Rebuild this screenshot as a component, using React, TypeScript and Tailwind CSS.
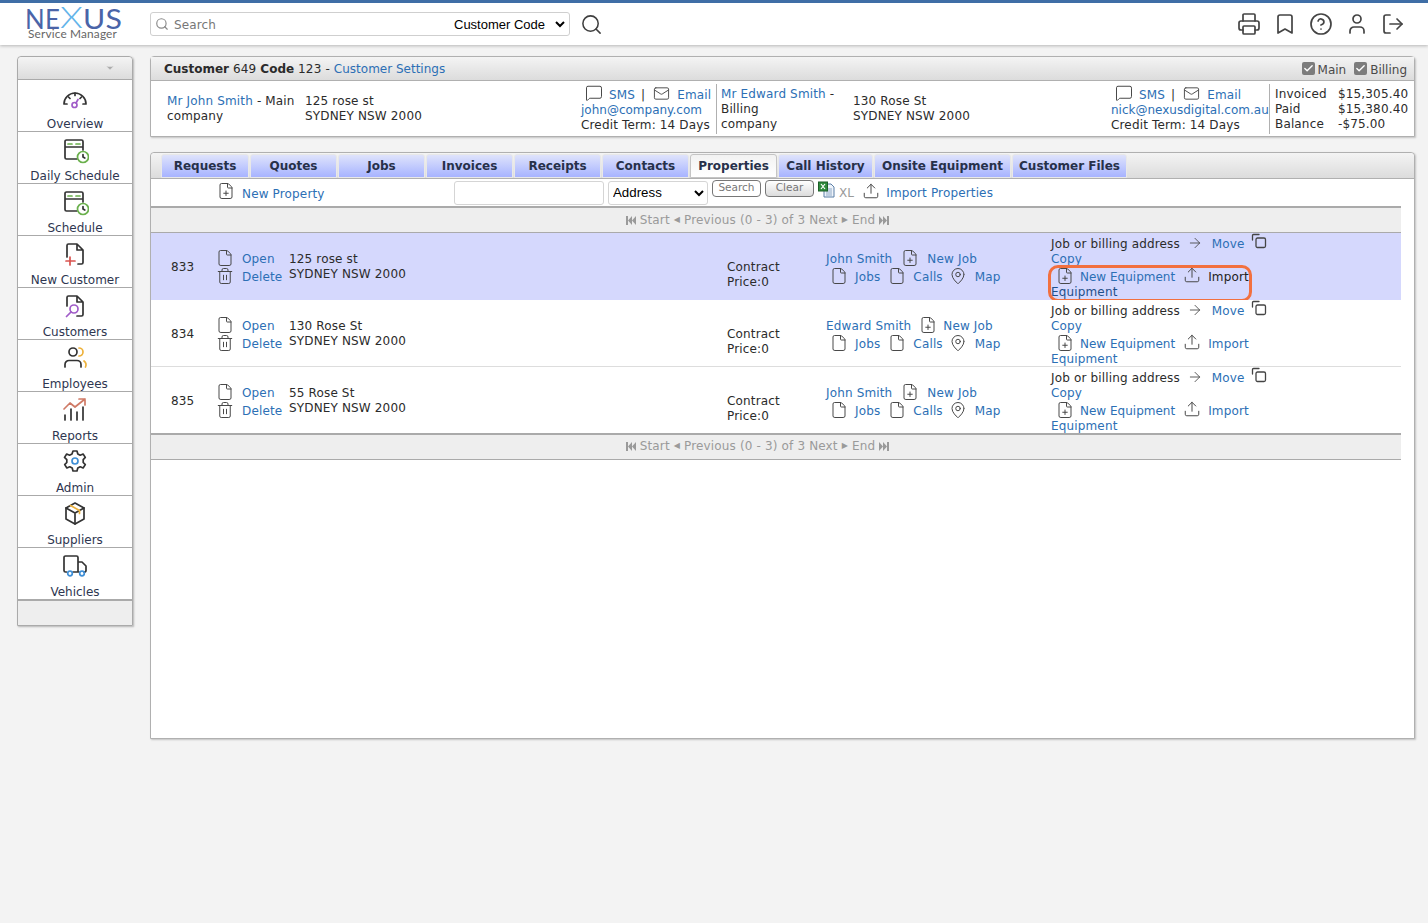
import { ArrowRight, Bookmark, Check, ChevronDown, CircleHelp, File, FilePlus, LogOut, LucideIcon, Mail, MapPin, MessageSquare, Printer, Search, Trash2, Upload, User } from 'lucide-react';
import { ReactNode } from 'react';

const tabs = [
  { name: 'Requests', width: 'w-[88px]' },
  { name: 'Quotes', width: 'w-[87px]' },
  { name: 'Jobs', width: 'w-[87px]' },
  { name: 'Invoices', width: 'w-[87px]' },
  { name: 'Receipts', width: 'w-[87px]' },
  { name: 'Contacts', width: 'w-[87px]' },
  { name: 'Properties', width: 'w-[87px]', active: true },
  { name: 'Call History', width: 'w-[95px]' },
  { name: 'Onsite Equipment', width: 'w-[137px]' },
  { name: 'Customer Files', width: 'w-[115px]' },
];

const rows = [
  { id: '833', street: '125 rose st', owner: 'John Smith', iconGap: 'ml-[10px]', jobGap: 'ml-[10px]', selected: true },
  { id: '834', street: '130 Rose St', owner: 'Edward Smith', iconGap: 'ml-[9px]', jobGap: 'ml-[8px]' },
  { id: '835', street: '55 Rose St', owner: 'John Smith', iconGap: 'ml-[10px]', jobGap: 'ml-[10px]' },
];

const Svg = ({ children }: { children: ReactNode }) => (
  <svg width="28" height="28" viewBox="0 0 28 28" fill="none" stroke="#333" strokeWidth="1.700" strokeLinecap="round" strokeLinejoin="round">
    {children}
  </svg>
);

const menu: { label: string; icon: ReactNode }[] = [
  {
    label: 'Overview',
    icon: (
      <Svg>
        <path d="M3 20h3M22 20h3M3 20c0-6 5-11 11-11s11 5 11 11" />
        <path d="M7.500 13l1.500 1.500M14 9v2.500M20.500 13L19 14.500" />
        <circle cx="13.500" cy="21" r="2.500" stroke="#a05cc8" />
        <path d="M15 19l2-3.500" stroke="#a05cc8" />
      </Svg>
    ),
  },
  {
    label: 'Daily Schedule',
    icon: (
      <Svg>
        <path d="M16 23H5.500A1.500 1.500 0 0 1 4 21.500V5.500A1.500 1.500 0 0 1 5.500 4h15A1.500 1.500 0 0 1 22 5.500V14M4 11h18" />
        <path d="M7 8h4M15 8h4" stroke="#6ab04c" />
        <circle cx="22" cy="21" r="5.500" stroke="#6ab04c" />
        <path d="M22 18.500V21l1.800 1" />
      </Svg>
    ),
  },
  {
    label: 'Schedule',
    icon: (
      <Svg>
        <path d="M16 23H5.500A1.500 1.500 0 0 1 4 21.500V5.500A1.500 1.500 0 0 1 5.500 4h15A1.500 1.500 0 0 1 22 5.500V14M4 11h18" />
        <path d="M7 8h4M15 8h4" stroke="#6ab04c" />
        <circle cx="22" cy="21" r="5.500" stroke="#6ab04c" />
        <path d="M22 18.500V21l1.800 1" />
      </Svg>
    ),
  },
  {
    label: 'New Customer',
    icon: (
      <Svg>
        <path d="M6 17V5.500A1.500 1.500 0 0 1 7.500 4H16l6 6v12.500a1.500 1.500 0 0 1-1.500 1.500H17M16 4v6h6" />
        <path d="M9 25v-8M5 21h9" stroke="#d9534f" />
      </Svg>
    ),
  },
  {
    label: 'Customers',
    icon: (
      <Svg>
        <path d="M6 14V5.500A1.500 1.500 0 0 1 7.500 4H16l6 6v12.500a1.500 1.500 0 0 1-1.500 1.500H16M16 4v6h6" />
        <circle cx="13" cy="17" r="4" stroke="#a05cc8" />
        <path d="M10 20l-4.500 4.500" stroke="#a05cc8" />
      </Svg>
    ),
  },
  {
    label: 'Employees',
    icon: (
      <Svg>
        <circle cx="12" cy="8" r="4" />
        <path d="M4 23v-2.500a4 4 0 0 1 4-4h8a4 4 0 0 1 4 4V23" />
        <path d="M18 4a4 4 0 0 1 0 8M23 17a5 5 0 0 1 1.500 6" stroke="#eeb23c" />
      </Svg>
    ),
  },
  {
    label: 'Reports',
    icon: (
      <Svg>
        <path d="M3 13l6-6 5 4 10-8M18 3h6v6" stroke="#cf7a66" />
        <path d="M4 24v-5M10 24V13M16 24V16M22 24V11" />
      </Svg>
    ),
  },
  {
    label: 'Admin',
    icon: (
      <Svg>
        <path d="M12 3h4l.8 3 2.400 1.200 2.900-1.200 2.200 3.400-2.100 2.200v2.800l2.100 2.200-2.200 3.400-2.900-1.200-2.400 1.200-.8 3h-4l-.8-3-2.400-1.200-2.900 1.200-2.200-3.400 2.100-2.200v-2.800L3.500 9.400 5.700 6l2.900 1.200L11 6z" />
        <circle cx="14" cy="13" r="3" stroke="#3f8fd6" />
      </Svg>
    ),
  },
  {
    label: 'Suppliers',
    icon: (
      <Svg>
        <path d="M14 3l9 5v11l-9 5-9-5V8z" />
        <path d="M5 8l9 5 9-5M14 13v11" />
        <path d="M9.500 5.500l9 5v3" stroke="#eeb23c" />
      </Svg>
    ),
  },
  {
    label: 'Vehicles',
    icon: (
      <Svg>
        <path d="M5.500 20H4.500A1.500 1.500 0 0 1 3 18.500v-13A1.500 1.500 0 0 1 4.500 4h11A1.500 1.500 0 0 1 17 5.500V20h-5M17 10h4l4 4v4.500a1.500 1.500 0 0 1-1.500 1.500H23M17 20h1" />
        <circle cx="9" cy="21.500" r="2.300" stroke="#3f8fd6" />
        <circle cx="21" cy="21.500" r="2.300" stroke="#3f8fd6" />
      </Svg>
    ),
  },
];

const Logo = () => (
  <svg width="100" height="42" viewBox="0 0 100 42" className="shrink-0 font-['Lato',sans-serif]">
    <text x="0" y="26" fontSize="27" fill="#4a64a8" textLength="35" lengthAdjust="spacingAndGlyphs">NE</text>
    <text x="35" y="25" fontSize="29" fontWeight="300" fill="#62b4ea" textLength="23" lengthAdjust="spacingAndGlyphs">X</text>
    <text x="58" y="26" fontSize="27" fill="#4a64a8" textLength="39" lengthAdjust="spacingAndGlyphs">US</text>
    <text x="3" y="35" fontSize="11" fill="#666" textLength="89" lengthAdjust="spacingAndGlyphs">Service Manager</text>
  </svg>
);

const Ico = ({ icon: Icon, className = '', size = 18 }: { icon: LucideIcon; className?: string; size?: number }) => (
  <span className={`flex h-[15px] w-[15px] shrink-0 items-center justify-center ${className}`}>
    <Icon size={size} strokeWidth={1.300} color="#444" className="shrink-0" />
  </span>
);

const CopyIcon = () => (
  <svg width="16" height="16" viewBox="0 0 16 16" fill="none" stroke="#444" strokeWidth="1.300" strokeLinecap="round" strokeLinejoin="round" className="inline-block">
    <rect x="5" y="5" width="9.500" height="9.500" rx="1.500" />
    <path d="M1.500 7V2.500a1 1 0 0 1 1-1H8" />
  </svg>
);

const ExcelIcon = () => (
  <svg width="17" height="17" viewBox="0 0 17 17" className="inline-block">
    <path d="M6 3h7l3 3v10H6z" fill="#eef3fa" stroke="#5a7ea6" />
    <path d="M8 8h6M8 10h6M8 12h6M8 14h6" stroke="#8fa9c6" />
    <rect x="0.500" y="1" width="9" height="9" fill="#2e8b3d" stroke="#1d5f28" />
    <path d="M3 3l4 5M7 3l-4 5" stroke="#fff" strokeWidth="1.200" />
  </svg>
);

const PagerEnd = ({ flip = false }: { flip?: boolean }) => (
  <svg width="10" height="9" viewBox="0 0 10 9" fill="#9a9a9a" className={flip ? '-scale-x-100' : ''}>
    <rect x="0" y="0" width="2" height="9" />
    <path d="M6 0v9L2 4.500zM10 0v9L6 4.500z" />
  </svg>
);

const Link = ({ children, className = '' }: { children: ReactNode; className?: string }) => (
  <a className={`text-[#2c6fb5] ${className}`}>{children}</a>
);

const Tick = ({ label }: { label: string }) => (
  <span className="flex items-center gap-[3px] tracking-normal text-[#4a4a4a]">
    <span className="flex h-[13px] w-[13px] items-center justify-center rounded-[2px] bg-[#7c7c7c]">
      <Check size={11} color="#fff" strokeWidth={3} />
    </span>
    <span className="mt-[3px]">{label}</span>
  </span>
);

const ContactLinks = ({ email }: { email: string }) => (
  <div className="pt-[3px] leading-[15px]">
    <div className="flex items-start">
      <Ico icon={MessageSquare} className="ml-[5px] -mt-[2px]" />
      <Link className="ml-[8px]">SMS</Link>
      <span className="ml-[6px]">|</span>
      <Ico icon={Mail} size={17} className="ml-[9px] -mt-[2px]" />
      <Link className="ml-[8px]">Email</Link>
    </div>
    <Link className="block tracking-normal">{email}</Link>
    <div>Credit Term: 14 Days</div>
  </div>
);

const Pager = ({ className = '' }: { className?: string }) => (
  <div className={`flex items-center justify-center bg-[#eeeeee] pr-[37px] text-[#9a9a9a] ${className}`}>
    <PagerEnd />
    <span className="ml-[4px]">Start</span>
    <span className="mx-[4px] text-[8px]">◀</span>
    <span>Previous (0 - 3) of 3 Next</span>
    <span className="mx-[4px] text-[8px]">▶</span>
    <span className="mr-[4px]">End</span>
    <PagerEnd flip />
  </div>
);

export default function App() {
  return (
    <div className="min-h-[923px] bg-[#f3f3f3] font-['DejaVu_Sans',sans-serif] text-[12px] tracking-[0.15px] text-[#2b2b2b]">
      <header className="flex h-[45px] items-center border-t-[3px] border-[#3f6ea6] bg-white pr-[23px] shadow-[0_1px_3px_rgba(0,0,0,0.25)]">
        <div className="ml-[25px] w-[125px] shrink-0">
          <Logo />
        </div>
        <div className="flex h-[24px] w-[420px] items-center rounded-[3px] border border-[#cfcfcf] bg-white pl-[4px]">
          <Search size={14} color="#8a8a8a" />
          <span className="ml-[5px] mt-[1px] flex-1 text-[#777]">Search</span>
          <select className="mr-[1px] w-[118px] bg-white font-['Liberation_Sans',sans-serif] text-[13px] tracking-normal text-black" defaultValue="Customer Code">
            <option>Customer Code</option>
          </select>
        </div>
        <Search size={23} color="#3f3f3f" strokeWidth={1.600} className="ml-[10px]" />
        <div className="ml-auto flex items-center gap-[12px] text-[#444]">
          <Printer size={24} strokeWidth={1.700} />
          <Bookmark size={24} strokeWidth={1.700} />
          <CircleHelp size={24} strokeWidth={1.700} />
          <User size={24} strokeWidth={1.700} />
          <LogOut size={24} strokeWidth={1.700} />
        </div>
      </header>

      <div className="flex items-start pl-[17px] pr-[13px] pt-[11px]">
        <aside className="w-[116px] shrink-0 rounded-t-[4px] border border-[#aaaaaa] shadow-[1px_1px_2px_rgba(0,0,0,0.25)]">
          <div className="flex h-[22px] items-center justify-end rounded-t-[4px] bg-gradient-to-b from-[#f4f4f4] to-[#dcdcdc] pr-[17px]">
            <ChevronDown size={10} color="#aaa" fill="#aaa" />
          </div>
          {menu.map((item) => (
            <div key={item.label} className="flex h-[52px] flex-col items-center border-t border-[#aaaaaa] bg-white">
              <div className="flex h-[36px] items-center">{item.icon}</div>
              <div className="mt-[2px] leading-[13px] tracking-normal text-[#2e3650]">{item.label}</div>
            </div>
          ))}
          <div className="h-[26px] border-t-2 border-[#aaaaaa] bg-[#eeeeee]" />
        </aside>

        <main className="ml-[17px] flex-1">
          <section className="rounded-t-[4px] border border-[#b0b0b0] bg-white shadow-[1px_1px_2px_rgba(0,0,0,0.2)]">
            <div className="flex h-[24px] items-center justify-between border-b border-[#b0b0b0] bg-gradient-to-b from-[#f4f4f4] to-[#dcdcdc] pl-[13px] pr-[7px]">
              <div>
                <b className="tracking-normal">Customer</b> 649 <b className="tracking-normal">Code</b> 123 - <Link className="tracking-normal">Customer Settings</Link>
              </div>
              <div className="flex gap-[8px]">
                <Tick label="Main" />
                <Tick label="Billing" />
              </div>
            </div>
            <div className="grid h-[55px] grid-cols-[154px_276px_136px_136px_258px_159px_1fr] items-center leading-[15px]">
              <div className="pl-[16px]">
                <div>
                  <Link>Mr John Smith</Link> - Main
                </div>
                <div>company</div>
              </div>
              <div>
                <div>125 rose st</div>
                <div>SYDNEY NSW 2000</div>
              </div>
              <div className="flex h-[50px] items-center border-r border-[#b0b0b0]">
                <ContactLinks email="john@company.com" />
              </div>
              <div className="pl-[4px] pt-[2px]">
                <div>
                  <Link>Mr Edward Smith</Link> -
                </div>
                <div>Billing</div>
                <div>company</div>
              </div>
              <div>
                <div>130 Rose St</div>
                <div>SYDNEY NSW 2000</div>
              </div>
              <div className="flex h-[50px] items-center border-r border-[#b0b0b0]">
                <ContactLinks email="nick@nexusdigital.com.au" />
              </div>
              <div className="grid grid-cols-[63px_1fr] pl-[5px] pt-[2px]">
                <div>Invoiced</div>
                <div>$15,305.40</div>
                <div>Paid</div>
                <div>$15,380.40</div>
                <div>Balance</div>
                <div>-$75.00</div>
              </div>
            </div>
          </section>

          <section className="mt-[15px] h-[587px] rounded-t-[4px] border border-[#b0b0b0] bg-white shadow-[1px_1px_2px_rgba(0,0,0,0.2)]">
            <div className="flex h-[26px] items-end gap-[1px] rounded-t-[4px] border-b border-[#b0b0b0] bg-gradient-to-b from-[#f4f4f4] to-[#dcdcdc] pl-[10px]">
              {tabs.map((tab) => (
                <div
                  key={tab.name}
                  className={`flex h-[24px] items-center justify-center rounded-t-[3px] border text-[12px] font-bold tracking-normal text-[#27314a] ${tab.width} ${
                    tab.active ? 'border-[#c4c4c4] bg-gradient-to-b from-[#f2f2f2] to-white' : 'border-[#e8e8e8] bg-gradient-to-b from-[#dfe3fb] to-[#a7b3ff]'
                  }`}
                >
                  {tab.name}
                </div>
              ))}
            </div>

            <div className="mr-[13px]">
              <div className="flex h-[29px] items-center border-b-2 border-[#aaaaaa]">
                <Ico icon={FilePlus} className="ml-[67px] -mt-[3px]" />
                <Link className="ml-[9px] mt-[2px] w-[212px]">New Property</Link>
                <div className="h-[24px] w-[150px] rounded-[3px] border border-[#d5d5d5] bg-white" />
                <select className="ml-[4px] h-[24px] w-[100px] rounded-[3px] border border-[#d5d5d5] bg-white font-['Liberation_Sans',sans-serif] text-[13.300px] tracking-normal text-black" defaultValue="Address">
                  <option>Address</option>
                </select>
                <div className="mb-[9px] ml-[4px] flex h-[17px] w-[49px] items-center justify-center rounded-[4px] border border-[#777] bg-white text-[10.500px] tracking-normal text-[#777]">Search</div>
                <div className="mb-[9px] ml-[4px] flex h-[17px] w-[49px] items-center justify-center rounded-[4px] border border-[#777] bg-gradient-to-b from-white to-[#dcdcdc] text-[10.500px] tracking-normal text-[#777]">Clear</div>
                <span className="mb-[7px] ml-[4px] flex">
                  <ExcelIcon />
                </span>
                <span className="ml-[4px] mt-[1px] text-[#9a9a9a]">XL</span>
                <Ico icon={Upload} className="ml-[9px] -mt-[4px]" />
                <Link className="ml-[8px] mt-[1px]">Import Properties</Link>
              </div>
              <Pager className="h-[25px] border-b border-[#aaaaaa]" />

              {rows.map((row, i) => (
                <div
                  key={row.id}
                  className={`relative grid grid-cols-[68px_70px_438px_99px_225px_1fr] leading-[15px] ${row.selected ? 'bg-[#d5d8fd]' : 'bg-white'} ${i === 1 ? 'border-b border-[#dddddd]' : ''} ${i === 2 ? 'h-[66px]' : 'h-[67px]'}`}
                >
                  <div className="pl-[20px] pt-[27px]">{row.id}</div>
                  <div className="pt-[19px]">
                    <div className="flex h-[18px] items-start">
                      <Ico icon={File} className="-ml-[2px] -mt-[2px]" />
                      <Link className="ml-[10px]">Open</Link>
                    </div>
                    <div className="flex h-[18px] items-start">
                      <Ico icon={Trash2} className="-ml-[2px] -mt-[2px]" />
                      <Link className="ml-[10px]">Delete</Link>
                    </div>
                  </div>
                  <div className="pt-[19px]">
                    <div>{row.street}</div>
                    <div>SYDNEY NSW 2000</div>
                  </div>
                  <div className="pt-[27px]">
                    <div>Contract</div>
                    <div>Price:0</div>
                  </div>
                  <div className="pt-[19px]">
                    <div className="flex h-[18px] items-start">
                      <Link>{row.owner}</Link>
                      <Ico icon={FilePlus} className={`${row.iconGap} -mt-[2px]`} />
                      <Link className={row.jobGap}>New Job</Link>
                    </div>
                    <div className="flex h-[18px] items-start pl-[5px]">
                      <Ico icon={File} className="-mt-[2px]" />
                      <Link className="ml-[9px]">Jobs</Link>
                      <Ico icon={File} className="ml-[9px] -mt-[2px]" />
                      <Link className="ml-[9px]">Calls</Link>
                      <Ico icon={MapPin} className="ml-[8px] -mt-[2px]" />
                      <Link className="ml-[9px]">Map</Link>
                    </div>
                  </div>
                  <div className="pt-[4px]">
                    <div className="flex h-[15px] items-start">
                      <span>Job or billing address</span>
                      <Ico icon={ArrowRight} size={16} className="ml-[8px] -mt-[2px]" />
                      <Link className="ml-[9px]">Move</Link>
                      <span className="ml-[6px] -mt-[4px]">
                        <CopyIcon />
                      </span>
                    </div>
                    <Link className="block">Copy</Link>
                    <div className="flex h-[18px] items-start pl-[6px] pt-[3px]">
                      <Ico icon={FilePlus} className="-mt-[2px]" />
                      <Link className="ml-[8px] tracking-normal">New Equipment</Link>
                      <Ico icon={Upload} className="ml-[9px] -mt-[3px]" />
                      <a className={`ml-[9px] ${row.selected ? 'text-[#222]' : 'text-[#2c6fb5]'}`}>Import</a>
                    </div>
                    <a className={row.selected ? 'block text-[#1f4f8a]' : 'block text-[#2c6fb5]'}>Equipment</a>
                  </div>
                  {row.selected && <div className="absolute left-[897px] top-[32px] h-[37px] w-[204px] rounded-[10px] border-[3px] border-[#f2703f]" />}
                </div>
              ))}
              <div className="border-t-2 border-[#aaaaaa]">
                <Pager className="h-[25px] border-b border-[#aaaaaa] pb-[2px]" />
              </div>
            </div>
          </section>
        </main>
      </div>
    </div>
  );
}
